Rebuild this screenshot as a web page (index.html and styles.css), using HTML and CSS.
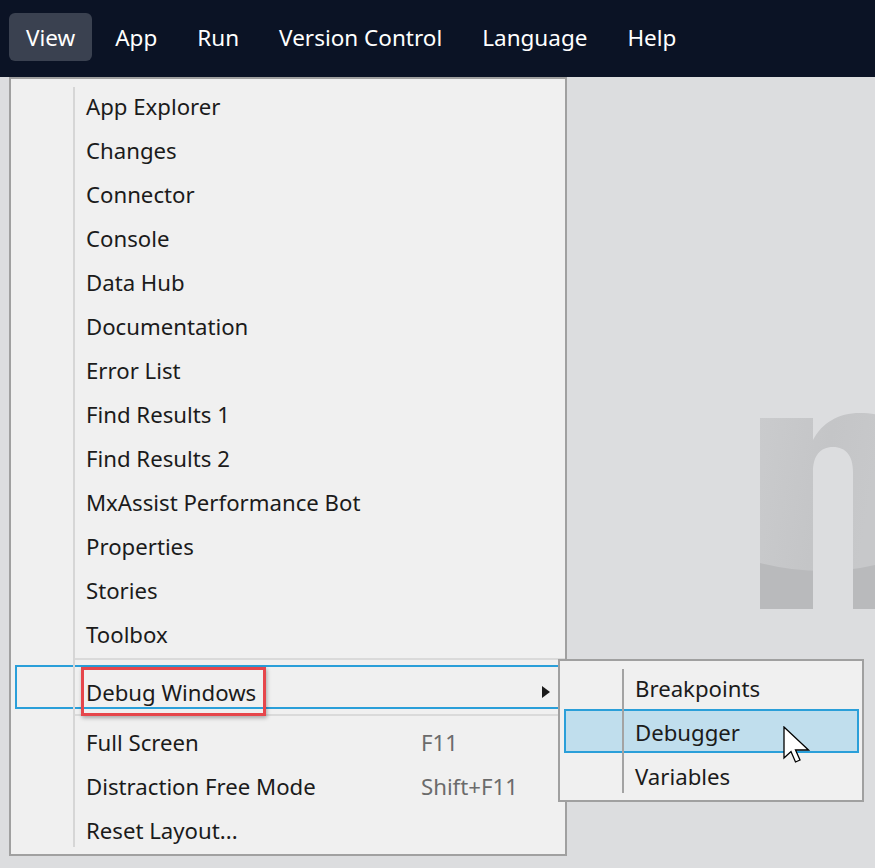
FILE: index.html
```html
<!DOCTYPE html>
<html lang="en">
<head>
<meta charset="utf-8">
<title>View menu</title>
<link rel="stylesheet" href="styles.css">
</head>
<body>
<header class="menubar">
  <div class="mb-item active">View</div>
  <div class="mb-item">App</div>
  <div class="mb-item">Run</div>
  <div class="mb-item">Version Control</div>
  <div class="mb-item">Language</div>
  <div class="mb-item">Help</div>
</header>
<main class="workspace">
  <svg class="logo" viewBox="0 0 115 200" width="115" height="200" aria-hidden="true">
    <defs>
      <clipPath id="nclip">
        <path d="M0,8 H53 V30 C62,13 78,3 100,3 C108,3 115,4 120,5 V199 H93 V62 C93,46 86,37 73,37 C60,37 53,46 53,62 V199 H0 Z"/>
      </clipPath>
      <linearGradient id="ngrad" x1="0" y1="0" x2="1" y2="0.3">
        <stop offset="0" stop-color="#cacbcd"/>
        <stop offset="0.6" stop-color="#c4c5c7"/>
        <stop offset="1" stop-color="#c7c8ca"/>
      </linearGradient>
    </defs>
    <g clip-path="url(#nclip)">
      <rect x="0" y="0" width="115" height="200" fill="url(#ngrad)"/>
      <path d="M0,153 Q60,168 115,155 L115,200 L0,200 Z" fill="#b9babc"/>
    </g>
  </svg>

  <div class="menu main-menu">
    <div class="row"><span>App Explorer</span></div>
    <div class="row"><span>Changes</span></div>
    <div class="row"><span>Connector</span></div>
    <div class="row"><span>Console</span></div>
    <div class="row"><span>Data Hub</span></div>
    <div class="row"><span>Documentation</span></div>
    <div class="row"><span>Error List</span></div>
    <div class="row"><span>Find Results 1</span></div>
    <div class="row"><span>Find Results 2</span></div>
    <div class="row"><span>MxAssist Performance Bot</span></div>
    <div class="row"><span>Properties</span></div>
    <div class="row"><span>Stories</span></div>
    <div class="row"><span>Toolbox</span></div>
    <div class="sep"></div>
    <div class="row hover"><span class="marked">Debug Windows</span><span></span><span class="arrow"></span></div>
    <div class="sep sep-low"></div>
    <div class="row"><span>Full Screen</span><span class="shortcut">F11</span></div>
    <div class="row"><span>Distraction Free Mode</span><span class="shortcut">Shift+F11</span></div>
    <div class="row"><span>Reset Layout...</span></div>
  </div>

  <div class="menu submenu">
    <div class="row"><span>Breakpoints</span></div>
    <div class="row selected"><span>Debugger</span></div>
    <div class="row"><span>Variables</span></div>
  </div>

  <svg class="cursor" viewBox="0 0 27 38" width="27" height="38" aria-hidden="true">
    <path d="M1,1 L1,32 L8,25.5 L12.5,36 L17,34 L12.5,24 L25.5,24 Z" fill="#ffffff" stroke="#000000" stroke-width="1.3" stroke-linejoin="miter"/>
  </svg>
</main>
</body>
</html>
```

FILE: styles.css
```css
* {
  box-sizing: border-box;
}

body {
  margin: 0;
  width: 875px;
  height: 868px;
  overflow: hidden;
  background: #dcdddf;
  font-family: "Noto Sans", "Open Sans", sans-serif;
  display: flex;
  flex-direction: column;
}

.menubar {
  height: 77px;
  flex: none;
  background: #0b1325;
  display: flex;
  align-items: flex-start;
  padding: 13px 0 0 9px;
  gap: 6px;
}

.mb-item {
  height: 48px;
  padding: 1px 17px 0;
  display: flex;
  align-items: center;
  color: #ffffff;
  font-size: 22.5px;
  border-radius: 6px;
  white-space: nowrap;
}

.mb-item.active {
  background: #3a4150;
}

.workspace {
  flex: 1;
  position: relative;
  display: flex;
  justify-content: flex-end;
  align-items: flex-start;
}

.logo {
  margin-top: 333px;
  display: block;
}

.menu {
  position: absolute;
  background: #f0f0f0;
  border: 2px solid #a0a0a0;
  color: #1b1b1b;
  font-size: 22.2px;
  padding: 4px 0;
}

.menu::before {
  content: "";
  position: absolute;
  left: 62px;
  top: 8px;
  bottom: 7px;
  width: 2px;
  background: #d6d6d6;
}

.main-menu {
  left: 9px;
  top: 0;
  width: 558px;
  height: 779px;
}

.submenu {
  left: 558px;
  top: 582px;
  width: 306px;
  height: 143px;
}

.submenu::before {
  background: #a3a3a3;
}

.row {
  height: 44px;
  margin: 0 4px;
  border: 2px solid transparent;
  padding: 2px 0 0 69px;
  display: grid;
  grid-template-columns: 335px 1fr auto;
  align-items: center;
  white-space: nowrap;
}

.submenu .row {
  margin: 0 3px 0 4px;
  grid-template-columns: 1fr;
}

.row.hover {
  border-color: #2a9fd9;
}

.row.selected {
  background: #c0deed;
  border-color: #2a9fd9;
}

.marked {
  justify-self: start;
  display: flex;
  align-items: center;
  height: 49px;
  margin: -2px 0 0 -5px;
  padding: 2px 7px 0 2px;
  border: 3px solid #e6464b;
  box-shadow: 1px 2px 4px rgba(0, 0, 0, 0.3);
}

.shortcut {
  color: #6b6b6b;
}

.arrow {
  width: 0;
  height: 0;
  margin: -2px 9px 0 0;
  border-left: 8px solid #1b1b1b;
  border-top: 6.5px solid transparent;
  border-bottom: 6.5px solid transparent;
}

.sep {
  height: 10px;
  margin-left: 63px;
  background: linear-gradient(#dadada, #dadada) 0 3px / 100% 2px no-repeat;
}

.sep-low {
  background-position: 0 5px;
}

.cursor {
  position: absolute;
  left: 783px;
  top: 649px;
}
```
